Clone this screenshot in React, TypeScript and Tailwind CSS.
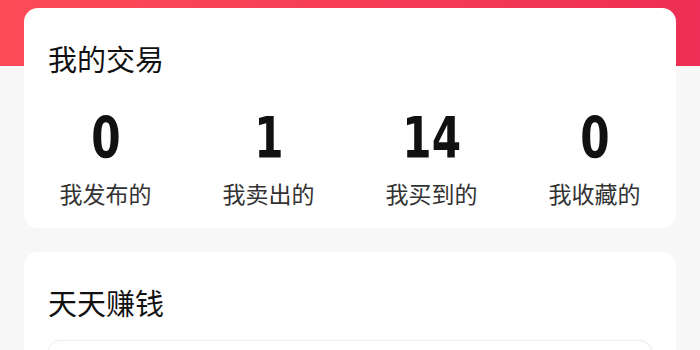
import React from "react";

const stats = [
  { n: "0", label: "我发布的" },
  { n: "1", label: "我卖出的" },
  { n: "14", label: "我买到的" },
  { n: "0", label: "我收藏的" },
];

export default function App() {
  return (
    <div
      className="h-[350px] w-[700px] overflow-hidden bg-[#f7f7f7]"
      style={{ fontFamily: '"Noto Sans CJK SC", "Noto Sans", sans-serif' }}
    >
      <div className="h-[66px] bg-gradient-to-r from-[#fd4b58] to-[#ee2e54]" />
      <div className="-mt-[58px] px-6">
        <div className="h-[220px] rounded-[14px] bg-white">
          <div className="pl-6 pt-[31px] text-[29px] leading-[38px] text-[#111]">我的交易</div>
          <div className="mt-[33px] grid grid-cols-4">
            {stats.map((s, i) => (
              <div key={i} className="flex flex-col items-center">
                <div
                  className="scale-x-[0.74] text-[57px] font-bold leading-[56px] text-[#111]"
                  style={{ fontFamily: '"DejaVu Sans", sans-serif' }}
                >
                  {s.n}
                </div>
                <div className="mt-[12px] text-[23px] leading-[30px] text-[#333]">{s.label}</div>
              </div>
            ))}
          </div>
        </div>
        <div className="mt-6 h-[200px] rounded-[14px] bg-white">
          <div className="pl-6 pt-[31px] text-[29px] leading-[38px] text-[#111]">天天赚钱</div>
          <div className="mx-6 mt-[19px] h-[100px] rounded-[12px] border border-[#ececec] shadow-[0_0_2px_rgba(0,0,0,0.04)]" />
        </div>
      </div>
    </div>
  );
}
